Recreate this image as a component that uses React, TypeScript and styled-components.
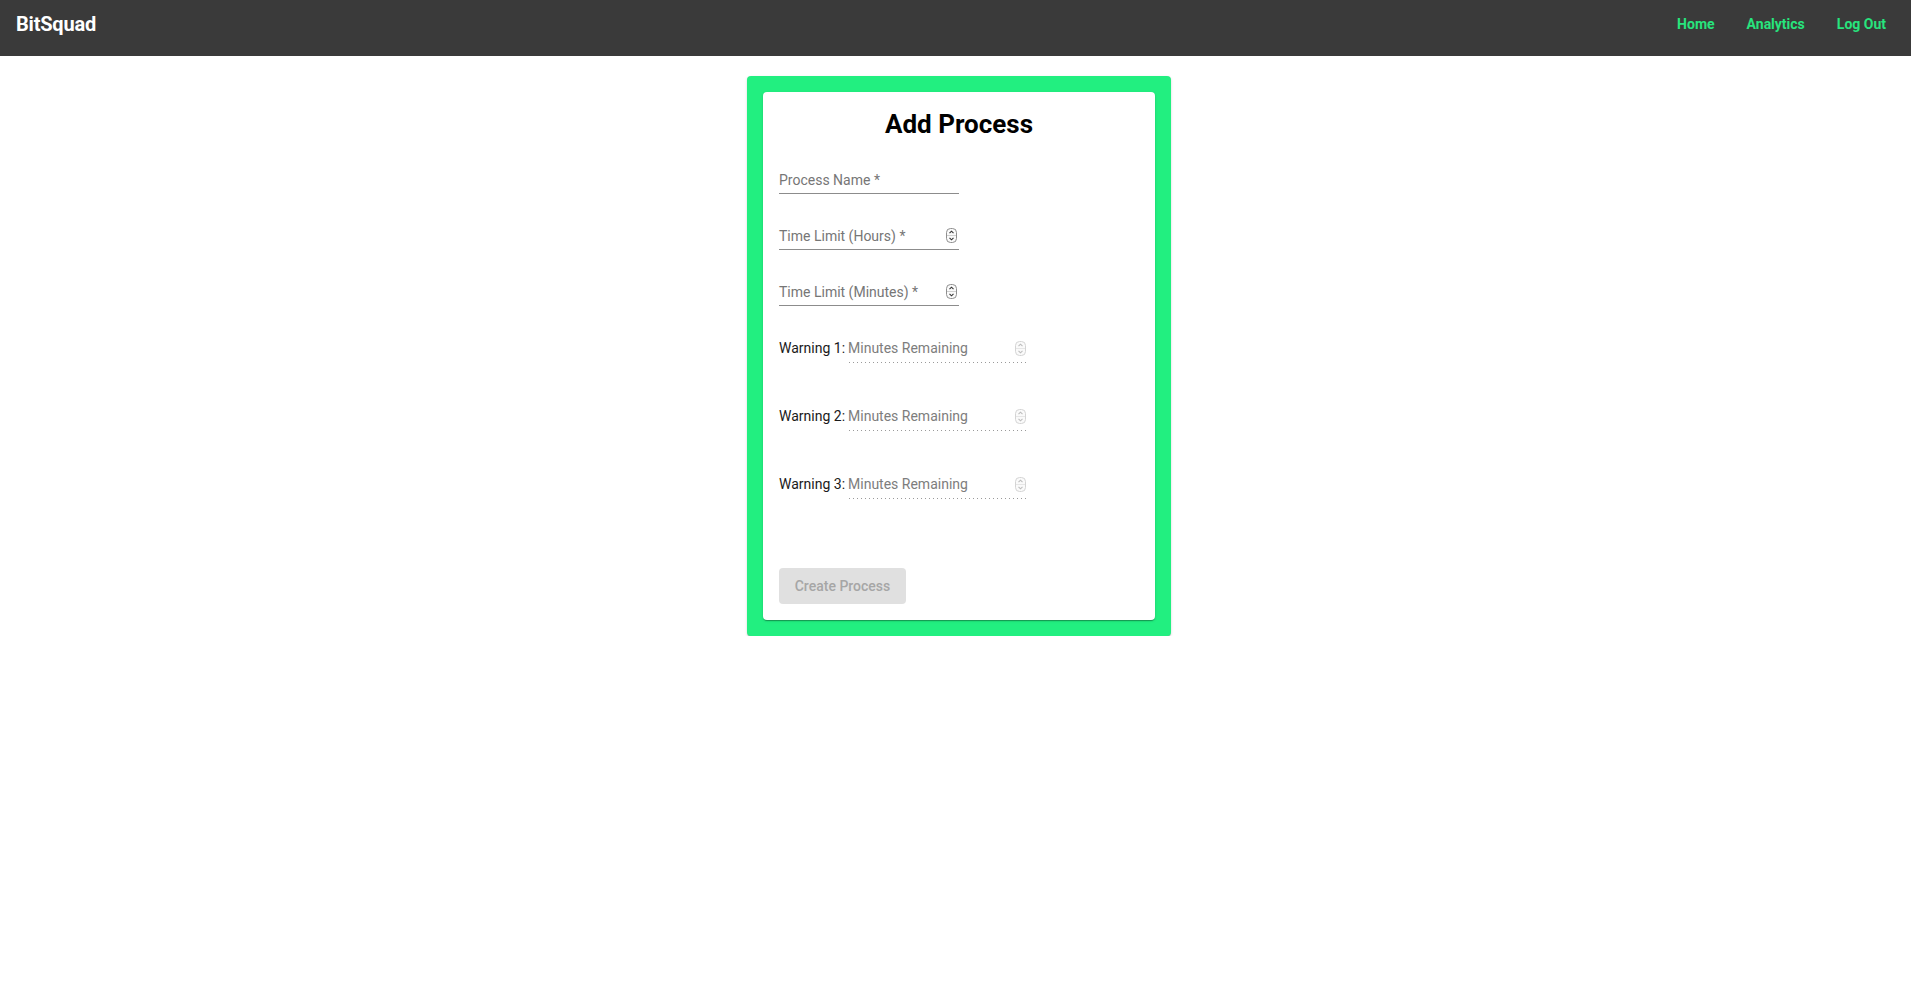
import React from "react";
import styled, { createGlobalStyle } from "styled-components";

const Global = createGlobalStyle`
  html, body { margin: 0; padding: 0; background: #ffffff; }
  body { font-family: Roboto, "Liberation Sans", Arial, sans-serif; }
  * { box-sizing: border-box; }
`;

const NavBar = styled.header`
  height: 56px;
  background: #3a3a3a;
  display: flex;
  align-items: center;
  justify-content: space-between;
  padding: 0 25px 8px 16px;
`;

const Brand = styled.div`
  color: #ffffff;
  font-size: 20px;
  font-weight: 700;
  letter-spacing: -0.2px;
`;

const NavLinks = styled.nav`
  display: flex;
  align-items: center;
  gap: 32px;
`;

const NavLink = styled.a`
  color: #27e47d;
  font-size: 14px;
  font-weight: 700;
  text-decoration: none;
`;

const Main = styled.main`
  display: flex;
  justify-content: center;
  padding: 20px 0 0 7px;
`;

const GreenFrame = styled.section`
  width: 424px;
  background: #22ef80;
  border-radius: 4px;
  padding: 16px;
  box-shadow: 0 2px 1px -1px rgba(0,0,0,0.2), 0 1px 1px 0 rgba(0,0,0,0.14), 0 1px 3px 0 rgba(0,0,0,0.12);
`;

const Paper = styled.div`
  background: #ffffff;
  border-radius: 4px;
  padding: 18px 16px 16px;
  display: flex;
  flex-direction: column;
  box-shadow: 0 2px 1px -1px rgba(0,0,0,0.2), 0 1px 1px 0 rgba(0,0,0,0.14), 0 1px 3px 0 rgba(0,0,0,0.12);
`;

const Title = styled.h2`
  margin: 0;
  text-align: center;
  font-size: 26px;
  line-height: 28px;
  font-weight: 700;
  color: #000000;
`;

const Field = styled.div`
  width: 180px;
  height: 56px;
  display: flex;
  align-items: flex-end;
`;

const FieldBox = styled.div`
  width: 100%;
  display: flex;
  align-items: center;
  justify-content: space-between;
  border-bottom: 1px solid #8c8c8c;
  padding: 1px 2px 2px 0;
  height: 27px;
`;

const Placeholder = styled.span<{ $light?: boolean }>`
  font-size: 14px;
  color: ${(p) => (p.$light ? "#7d7d7d" : "#767676")};
  white-space: nowrap;
`;

const WarningList = styled.div`
  display: flex;
  flex-direction: column;
  gap: 32px;
  margin-top: 21px;
`;

const WarningRow = styled.div`
  height: 36px;
  display: flex;
  align-items: flex-end;
`;

const WarningLabel = styled.span`
  font-size: 14px;
  color: #1a1a1a;
  white-space: nowrap;
  padding-bottom: 7px;
  margin-right: 3px;
`;

const WarningInput = styled.div`
  width: 178px;
  height: 27px;
  display: flex;
  align-items: center;
  justify-content: space-between;
  padding: 0 0 3px 0;
  background-image: linear-gradient(to right, #9a9a9a 1px, transparent 1px);
  background-size: 4px 1px;
  background-repeat: repeat-x;
  background-position: 1px bottom;
`;

const CreateButton = styled.button`
  margin-top: 69px;
  align-self: flex-start;
  width: 127px;
  height: 36px;
  border: none;
  border-radius: 4px;
  background: #e0e0e0;
  color: #a6a6a6;
  font-family: Roboto, "Liberation Sans", Arial, sans-serif;
  font-size: 14px;
  font-weight: 500;
  padding: 0;
  cursor: default;
`;

const Spinner: React.FC<{ light?: boolean }> = ({ light }) => {
  const stroke = light ? "#d4d4d4" : "#8f8f8f";
  const chev = light ? "#bdbdbd" : "#333333";
  return (
    <svg width="11" height="15" viewBox="0 0 11 15" aria-hidden>
      <rect x="0.5" y="0.5" width="10" height="14" rx="4" fill="#fafafa" stroke={stroke} />
      <line x1="1" y1="7.5" x2="10" y2="7.5" stroke={light ? "#e6e6e6" : "#cfcfcf"} />
      <path d="M3.5 5.2 L5.5 3.2 L7.5 5.2" fill="none" stroke={chev} strokeWidth="1.1" />
      <path d="M3.5 9.8 L5.5 11.8 L7.5 9.8" fill="none" stroke={chev} strokeWidth="1.1" />
    </svg>
  );
};

const fields = [
  { label: "Process Name *", spinner: false },
  { label: "Time Limit (Hours) *", spinner: true },
  { label: "Time Limit (Minutes) *", spinner: true },
];

export default function App() {
  return (
    <>
      <Global />
      <NavBar>
        <Brand>BitSquad</Brand>
        <NavLinks>
          <NavLink href="#">Home</NavLink>
          <NavLink href="#">Analytics</NavLink>
          <NavLink href="#">Log Out</NavLink>
        </NavLinks>
      </NavBar>
      <Main>
        <GreenFrame>
          <Paper>
            <Title>Add Process</Title>
            {fields.map((f) => (
              <Field key={f.label}>
                <FieldBox>
                  <Placeholder>{f.label}</Placeholder>
                  {f.spinner && <Spinner />}
                </FieldBox>
              </Field>
            ))}
            <WarningList>
              {[1, 2, 3].map((n) => (
                <WarningRow key={n}>
                  <WarningLabel>Warning {n}:</WarningLabel>
                  <WarningInput>
                    <Placeholder $light>Minutes Remaining</Placeholder>
                    <Spinner light />
                  </WarningInput>
                </WarningRow>
              ))}
            </WarningList>
            <CreateButton disabled>Create Process</CreateButton>
          </Paper>
        </GreenFrame>
      </Main>
    </>
  );
}
